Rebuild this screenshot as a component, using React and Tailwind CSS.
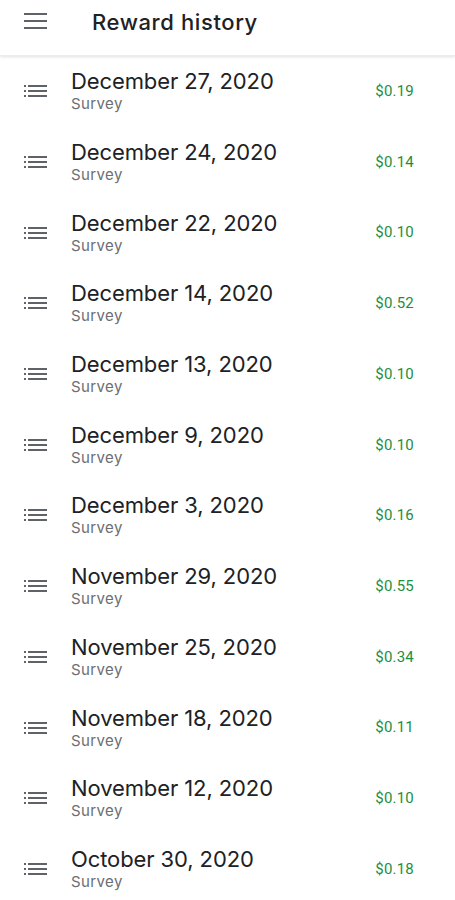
import React from "react";

const rows = [
  ["December 27, 2020", "$0.19"],
  ["December 24, 2020", "$0.14"],
  ["December 22, 2020", "$0.10"],
  ["December 14, 2020", "$0.52"],
  ["December 13, 2020", "$0.10"],
  ["December 9, 2020", "$0.10"],
  ["December 3, 2020", "$0.16"],
  ["November 29, 2020", "$0.55"],
  ["November 25, 2020", "$0.34"],
  ["November 18, 2020", "$0.11"],
  ["November 12, 2020", "$0.10"],
  ["October 30, 2020", "$0.18"],
];

function ListIcon() {
  return (
    <svg width="24" height="14" viewBox="0 0 24 14" className="shrink-0">
      <g fill="#5f6368">
        <rect x="0" y="1" width="2" height="2" />
        <rect x="0" y="6" width="2" height="2" />
        <rect x="0" y="11" width="2" height="2" />
        <rect x="4" y="1" width="19" height="2" />
        <rect x="4" y="6" width="19" height="2" />
        <rect x="4" y="11" width="19" height="2" />
      </g>
    </svg>
  );
}

function MenuIcon() {
  return (
    <svg width="24" height="18" viewBox="0 0 24 18" className="shrink-0">
      <g fill="#5f6368">
        <rect x="0" y="1" width="23" height="2" />
        <rect x="0" y="8" width="23" height="2" />
        <rect x="0" y="15" width="23" height="2" />
      </g>
    </svg>
  );
}

export default function App() {
  return (
    <div
      className="w-[455px] h-[900px] overflow-hidden bg-white"
      style={{ fontFamily: "Inter, Roboto, sans-serif" }}
    >
      <div className="h-14 flex items-start pt-[12px] pl-6 shadow-[0_1px_3px_rgba(0,0,0,0.12)] relative z-10 border-b border-[#ececec]">
        <MenuIcon />
        <div className="ml-[44px] -mt-[3px] text-[22px] leading-[27px] font-medium text-[#202124] tracking-[0.6px]">
          Reward history
        </div>
      </div>
      <div>
        {rows.map(([d, a]) => (
          <div key={d} className="h-[70.7px] flex items-center pl-6 pr-[41px]">
            <ListIcon />
            <div className="ml-[23px] flex-1 flex flex-col -mt-[1px]">
              <div className="text-[22px] leading-[27px] text-[#202124] tracking-[-0.1px]">{d}</div>
              <div className="text-[15px] leading-[18px] text-[#6b6e72] tracking-[0.4px]">Survey</div>
            </div>
            <div className="text-[15px] text-[#1e8e3e] tracking-[0.2px]" style={{ fontFamily: "Roboto, sans-serif" }}>{a}</div>
          </div>
        ))}
      </div>
    </div>
  );
}
